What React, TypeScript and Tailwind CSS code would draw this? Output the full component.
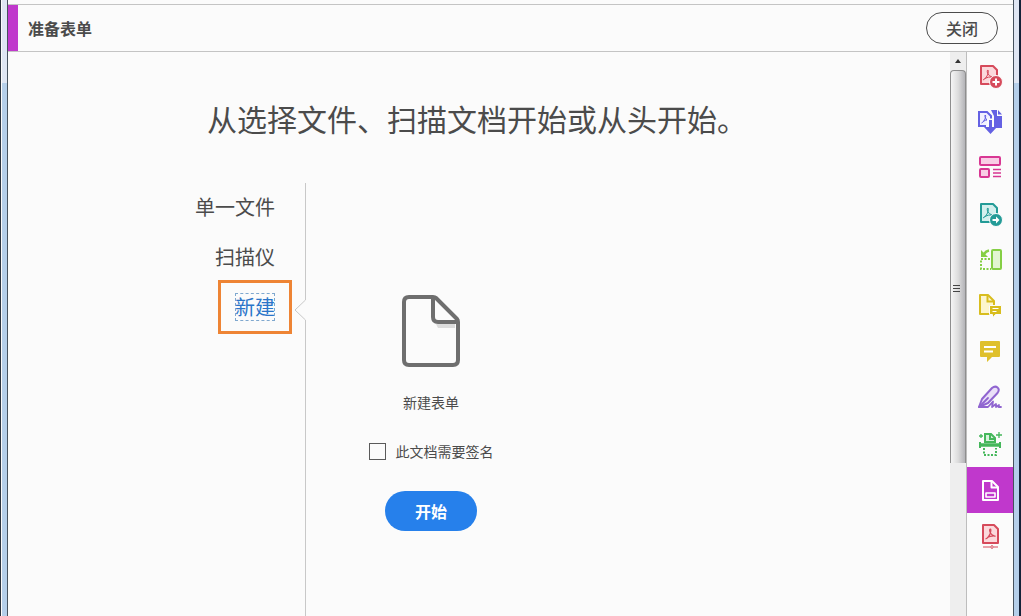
import { useState } from 'react'
import type { ReactNode } from 'react'

const SOURCES = ['单一文件', '扫描仪', '新建']

interface Tool {
  label: string
  icon: ReactNode
}

// Three-armed loop used on every PDF document icon
const LOOP = 'M6 17q3-1 4.500-5t.500-5q-1.500 0-.500 3t5.500 4.500M7.500 15.500q4-2 8.500-1.500'

const TOOLS: Tool[] = [
  {
    label: '创建 PDF',
    icon: (
      <g fill="none" stroke="#d64a5b" strokeWidth="2">
        <path d="M4 3h12l4 4v14H4z" fill="#fbd9dc" strokeLinejoin="round" />
        <path d={LOOP} strokeWidth="1" />
        <circle cx="19" cy="19" r="6.500" fill="#d64a5b" stroke="#fbfbfb" strokeWidth="1" />
        <path d="M19 15.500v7M15.500 19h7" stroke="#fff" />
      </g>
    ),
  },
  {
    label: '导出 PDF',
    icon: (
      <g fill="none" stroke="#6461e3" strokeWidth="2">
        <path d="M14 1h6v6h5v12h-8V7z" fill="#6461e3" stroke="none" />
        <path d="M21 1l4 4.500h-4z" fill="#6461e3" stroke="none" />
        <path d="M9 17H2V3h8l4 4v4" fill="#f1f0ff" />
        <path d="M4.500 14q2.500-1 3.500-4t.500-4q-1.500 0 0 3t3 2.500M6 12.500q3-2 5-1.500" strokeWidth="1" />
        <path d="M11.500 19v-8h4v8" fill="#fbfbfb" stroke="#fbfbfb" strokeWidth="3" />
        <path d="M12 11h3v7h5l-6.500 7L7 18h5z" fill="#6461e3" stroke="none" />
      </g>
    ),
  },
  {
    label: '组织页面',
    icon: (
      <g fill="none" stroke="#d83793" strokeWidth="2">
        <rect x="3" y="2" width="20" height="8" rx="1" fill="#f9cde5" />
        <rect x="3" y="14" width="9" height="8" rx="1" fill="#f9cde5" />
        <path d="M16 14.500h8M16 18h8M16 21.500h8" strokeWidth="1.300" />
      </g>
    ),
  },
  {
    label: '发送文件',
    icon: (
      <g fill="none" stroke="#239b97" strokeWidth="2">
        <path d="M4 3h12l4 4v14H4z" fill="#d3efed" strokeLinejoin="round" />
        <path d={LOOP} strokeWidth="1" />
        <circle cx="19" cy="19" r="6.500" fill="#239b97" stroke="#fbfbfb" strokeWidth="1" />
        <path d="M15.500 19H20" stroke="#fff" />
        <path d="M19 15.500l3.500 3.500l-3.500 3.500z" fill="#fff" stroke="none" />
      </g>
    ),
  },
  {
    label: '比较文件',
    icon: (
      <g fill="none" stroke="#85cf45" strokeWidth="2">
        <rect x="15" y="3" width="9" height="19" rx="1" fill="#e2f6d1" />
        <path d="M13 12H4v10h10" strokeDasharray="2 1.500" />
        <path d="M12 3.500Q9 4 7 7" strokeWidth="2.500" />
        <path d="M4 3v7h7z" fill="#85cf45" stroke="none" />
      </g>
    ),
  },
  {
    label: '添加注释页',
    icon: (
      <g fill="none" stroke="#d8bd1e" strokeWidth="2">
        <path d="M3 2h8l6 6v13H3z" fill="#fcf5cc" strokeLinejoin="round" />
        <path d="M10.500 2v6.500H17" />
        <path d="M12.500 12.500h12v9h-6l-3 3.500v-3.500h-3z" fill="#d8bd1e" stroke="#fbfbfb" strokeWidth="1" />
        <path d="M15.500 15.500h6M15.500 18.500h4" stroke="#fff" strokeWidth="1" />
      </g>
    ),
  },
  {
    label: '注释',
    icon: (
      <g>
        <path d="M4 2h18q1 0 1 1v14q0 1-1 1h-7l-5 5v-5H4q-1 0-1-1V3q0-1 1-1z" fill="#dfc02c" />
        <path d="M7 8h12M7 12.500h9" stroke="#fff" strokeWidth="1.800" />
      </g>
    ),
  },
  {
    label: '填写和签名',
    icon: (
      <g fill="none" stroke="#9065d0" strokeWidth="2" strokeLinejoin="round" strokeLinecap="round">
        <path d="M2 22l3-8L15 3q3-2.500 5.500-.500t0 5.500L11 18z" fill="#eadff8" />
        <path d="M2 22l9-9M2 22h9l5-5.500l-1 5.500l4-3v3l3-2l-.500 2h2.500" strokeWidth="1.800" />
      </g>
    ),
  },
  {
    label: '扫描',
    icon: (
      <g fill="none" stroke="#45b75b" strokeWidth="2">
        <path d="M8 11V3h6l4 4v4z" fill="#d7f2dc" />
        <path d="M13 3v5h5" />
        <path d="M3 17v-6M23 17v-6" />
        <path d="M2 14h22" strokeWidth="3.500" />
        <path d="M7 17v7h12v-7" strokeDasharray="2 1.500" />
        <path d="M22 1v6M19 4h6M4 3v4M2 5h4" strokeWidth="1.300" />
      </g>
    ),
  },
  {
    label: '准备表单',
    icon: (
      <g fill="none" stroke="#fff" strokeWidth="2" strokeLinejoin="round">
        <path d="M6 4h9l6 6v13H6z" />
        <path d="M14.500 4v6.500H21" />
        <rect x="9" y="16" width="9" height="4" strokeWidth="1.600" />
      </g>
    ),
  },
  {
    label: 'PDF 标准',
    icon: (
      <g fill="none" stroke="#d64a5b" strokeWidth="2">
        <path d="M6 2h11l4 4v14H6z" fill="#fbd9dc" strokeLinejoin="round" />
        <path d={LOOP} transform="translate(2.500 -1)" strokeWidth="1.200" />
        <path d="M6 24h7M17 24h4" strokeWidth="1" />
        <circle cx="15" cy="24" r="1.300" strokeWidth="1" />
      </g>
    ),
  },
]

function Scrollbar() {
  return (
    <div className="flex w-[17px] shrink-0 flex-col border-r border-[#bdbdbd] bg-[#eeeeee]">
      <div className="flex h-[18px] shrink-0 items-center justify-center">
        <svg width="6" height="4" viewBox="0 0 6 4">
          <path d="M0 4l3-4l3 4z" fill="#333" />
        </svg>
      </div>
      <div className="min-h-0 flex-1">
        <div className="flex h-[72%] flex-col items-center justify-center rounded-t-sm border border-b-0 border-[#8e8e8e] bg-linear-to-r from-[#f5f5f5] via-[#dddddd] to-[#b4b4b8] pt-11">
          <svg className="mr-1" width="7" height="8" viewBox="0 0 7 8">
            <path d="M0 .5h7M0 3.500h7M0 6.500h7" stroke="#444" />
          </svg>
        </div>
      </div>
    </div>
  )
}

export default function App() {
  const [source, setSource] = useState('新建')
  const [needsSignature, setNeedsSignature] = useState(false)

  return (
    <div className="flex h-screen overflow-hidden bg-[#fbfbfb] font-['Noto_Sans_CJK_SC',sans-serif] text-[#4b4b4b]">
      {/* Window frame, left */}
      <div className="flex w-2 shrink-0 border-x border-l-[#2c3440] border-r-[#46525e]">
        <div className="ml-px flex-1 bg-linear-to-b from-[#dfe6f3] from-[83px] to-[#b5cfea] to-[83px]" />
      </div>

      <div className="flex min-w-0 flex-1 flex-col">
        <header className="mt-1 flex h-12 shrink-0 items-center border-y border-[#c4c4c4] pr-[15px]">
          <div className="w-[10px] self-stretch bg-[#c038cc]" />
          <h1 className="ml-[10px] flex-1 text-base font-bold">准备表单</h1>
          <button
            type="button"
            className="flex h-8 w-[72px] items-center justify-center rounded-full border border-[#4b4b4b] pb-px text-base font-medium"
          >
            关闭
          </button>
        </header>

        <div className="flex min-h-0 flex-1">
          <main className="flex min-w-0 flex-1 flex-col pt-12">
            <h2 className="pr-1 text-center text-3xl leading-9 font-normal">
              从选择文件、扫描文档开始或从头开始。
            </h2>

            <div className="mx-auto mt-[47px] flex w-full max-w-[572px] flex-1">
              <nav className="flex w-[113px] shrink-0 flex-col items-end gap-[22px] border-r border-[#c8c8c8] pt-[10px] pr-[30px]">
                {SOURCES.map((name) => (
                  <button
                    key={name}
                    type="button"
                    onClick={() => setSource(name)}
                    className={`relative text-xl leading-7 font-normal whitespace-nowrap ${source === name ? 'text-[#2a75c9]' : ''}`}
                  >
                    {name}
                    {source === name && (
                      <>
                        <span className="absolute inset-0 border border-dashed border-[#7fa8cf]" />
                        <span className="absolute -inset-x-[17px] -inset-y-[13px] border-3 border-[#ee8434]" />
                        <svg
                          className="absolute top-[6px] -right-[31px]"
                          width="12"
                          height="22"
                          viewBox="0 0 12 22"
                        >
                          <path d="M12 1H11L1 11l10 10h1z" fill="#fbfbfb" />
                          <path d="M11.500 0v1L1 11l10.500 10v1" fill="none" stroke="#c8c8c8" />
                        </svg>
                      </>
                    )}
                  </button>
                ))}
              </nav>

              <section className="flex w-[250px] flex-col items-center pt-28">
                <svg width="58" height="72" viewBox="0 0 58 72">
                  <path d="M34 29h19v4H36z" fill="#dcdcdc" />
                  <path
                    d="M7 2h24q2 0 3 1l21 21q1 1 1 3v38q0 5-5 5H7q-5 0-5-5V7q0-5 5-5z"
                    fill="none"
                    stroke="#6e6e6e"
                    strokeWidth="4"
                  />
                  <path
                    d="M31 3v19q0 5 5 5h19"
                    fill="none"
                    stroke="#6e6e6e"
                    strokeWidth="4"
                  />
                </svg>
                <p className="mt-[25px] text-sm">新建表单</p>
                <label className="mt-[29px] flex items-center gap-[10px] text-sm">
                  <input
                    type="checkbox"
                    checked={needsSignature}
                    onChange={(e) => setNeedsSignature(e.target.checked)}
                    className="size-[17px] appearance-none border border-[#5a5a5a] checked:bg-[#2680eb]"
                  />
                  此文档需要签名
                </label>
                <button
                  type="button"
                  className="mt-[30px] flex h-10 w-[92px] items-center justify-center rounded-full bg-[#2680eb] pb-px text-base font-bold text-white"
                >
                  开始
                </button>
              </section>
            </div>
          </main>

          <Scrollbar />

          {/* Tool rail */}
          <aside className="flex w-[46px] shrink-0 flex-col pt-px">
            {TOOLS.map((tool) => (
              <button
                key={tool.label}
                type="button"
                aria-label={tool.label}
                className={`flex h-[46px] shrink-0 items-center justify-center ${tool.label === '准备表单' ? 'bg-[#c038cc]' : ''}`}
              >
                <svg width="26" height="26" viewBox="0 0 26 26">
                  {tool.icon}
                </svg>
              </button>
            ))}
          </aside>
        </div>
      </div>

      {/* Window frame, right */}
      <div className="w-2 shrink-0 border-r-2 border-l border-r-[#142238] border-l-[#46525e] bg-linear-to-b from-[#dfe6f3] from-[83px] to-[#b5cfea] to-[83px]" />
    </div>
  )
}
